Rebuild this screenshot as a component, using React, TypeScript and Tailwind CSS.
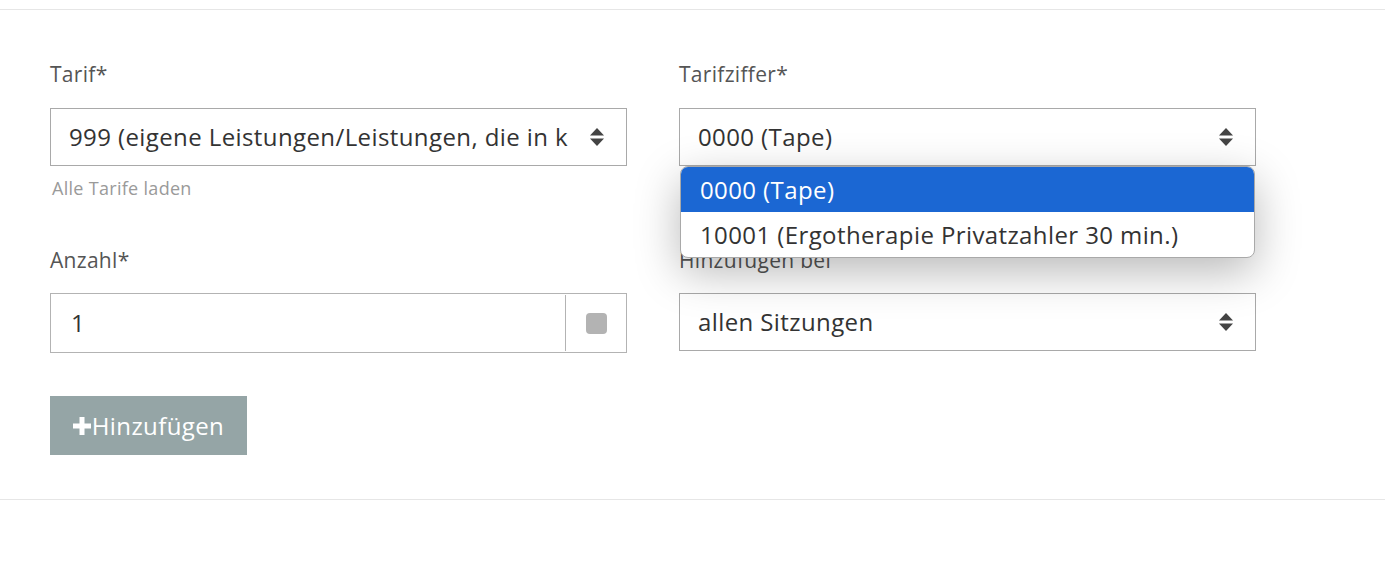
import React from "react";

const Arrows = () => (
  <svg width="14" height="20" viewBox="0 0 14 20" className="shrink-0">
    <path d="M7 1 L14 8.5 L0 8.5 Z" fill="#444" />
    <path d="M0 11.5 L14 11.5 L7 19 Z" fill="#444" />
  </svg>
);

export default function App() {
  return (
    <div className="min-h-[579px] bg-white pt-[9px]" style={{ fontFamily: "'Open Sans', sans-serif" }}>
      <div className="border-t border-b border-[#e6e6e6] pl-[50px] pr-[129px] pt-[51px] pb-[44px]">
        <div className="grid grid-cols-[577px_577px] gap-x-[52px]">
          <div className="flex flex-col">
            <label className="text-[21px] leading-[27px] tracking-[0.3px] text-[#555]">Tarif*</label>
            <div className="mt-[20px] flex h-[58px] items-center border border-[#a9a9a9] bg-white pl-[18px] pr-[22px]">
              <span className="flex-1 overflow-hidden whitespace-nowrap text-[24px] tracking-[0.4px] text-[#333]">
                999 (eigene Leistungen/Leistungen, die in keinem Tarif aufgeführt sind)
              </span>
              <span className="ml-[22px]"><Arrows /></span>
            </div>
            <span className="mt-[11px] pl-[2px] text-[18px] leading-[22px] tracking-[0.3px] text-[#9a9a9a]">Alle Tarife laden</span>
          </div>
          <div className="relative flex flex-col">
            <label className="text-[21px] leading-[27px] tracking-[0.3px] text-[#555]">Tarifziffer*</label>
            <div className="mt-[20px] flex h-[58px] items-center border border-[#a9a9a9] bg-white pl-[18px] pr-[22px]">
              <span className="flex-1 whitespace-nowrap text-[24px] tracking-[0.4px] text-[#333]">0000 (Tape)</span>
              <Arrows />
            </div>
            <div className="absolute left-[1px] top-[105px] z-10 w-[575px] overflow-hidden rounded-[8px] border border-[#a9a9a9] bg-white shadow-[0_14px_45px_rgba(0,0,0,0.28)]">
              <div className="flex h-[45px] items-center bg-[#1b67d3] pl-[19px] text-[24px] tracking-[0.4px] text-white">0000 (Tape)</div>
              <div className="flex h-[45px] items-center pl-[19px] text-[24px] tracking-[0.4px] text-[#333]">10001 (Ergotherapie Privatzahler 30 min.)</div>
            </div>
          </div>
        </div>
        <div className="mt-[48px] grid grid-cols-[577px_577px] gap-x-[52px]">
          <div className="flex flex-col">
            <label className="text-[21px] leading-[27px] tracking-[0.3px] text-[#555]">Anzahl*</label>
            <div className="mt-[19px] flex h-[60px] items-stretch border border-[#b3b3b3] bg-white">
              <span className="flex flex-1 items-center pl-[20px] text-[24px] text-[#333]">1</span>
              <span className="my-[1px] w-px bg-[#b3b3b3]" />
              <span className="flex w-[60px] items-center justify-center">
                <span className="block h-[21px] w-[21px] rounded-[4px] bg-[#b3b3b3]" />
              </span>
            </div>
          </div>
          <div className="flex flex-col">
            <label className="text-[21px] leading-[27px] tracking-[0.3px] text-[#555]">Hinzufügen bei</label>
            <div className="mt-[19px] flex h-[58px] items-center border border-[#a9a9a9] bg-white pl-[18px] pr-[22px]">
              <span className="flex-1 whitespace-nowrap text-[24px] tracking-[0.4px] text-[#333]">allen Sitzungen</span>
              <Arrows />
            </div>
          </div>
        </div>
        <button className="mt-[43px] flex h-[59px] w-[197px] items-center justify-center bg-[#95a5a6] text-[24px] tracking-[0.4px] text-white">
          <svg width="18" height="18" viewBox="0 0 18 18" className="mr-[1px]">
            <path d="M6.5 0h5v6.5H18v5h-6.5V18h-5v-6.5H0v-5h6.5z" fill="#fff" />
          </svg>
          Hinzufügen
        </button>
      </div>
    </div>
  );
}
